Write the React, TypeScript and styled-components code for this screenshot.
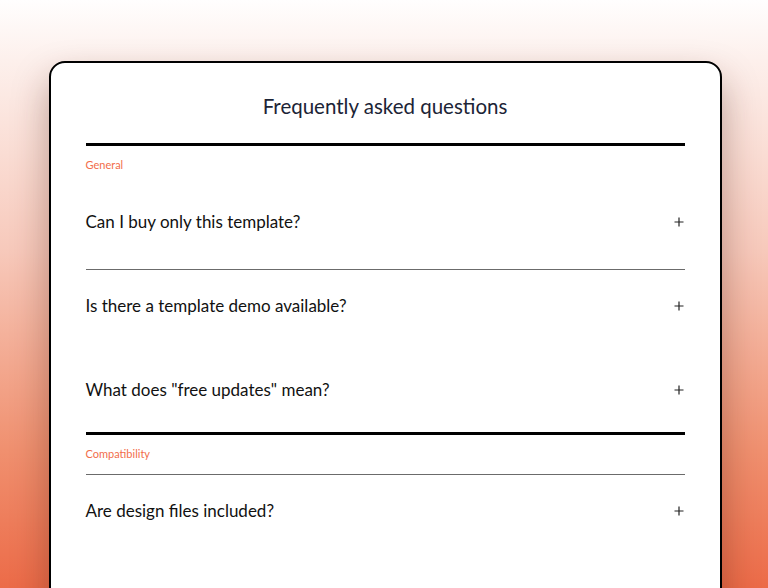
import React from "react";
import styled, { createGlobalStyle } from "styled-components";

const Global = createGlobalStyle`
  html, body { margin: 0; padding: 0; }
  body {
    height: 588px;
    overflow: hidden;
    font-family: Lato, "Open Sans", sans-serif;
    background: linear-gradient(
      to bottom,
      #fffefe 0px,
      #fdf0ec 60px,
      #f7c9bb 250px,
      #f0906f 450px,
      #ec6b48 588px
    );
  }
`;

const Page = styled.main`
  padding-top: 61px;
  display: flex;
  justify-content: center;
  padding-left: 2px;
`;

const Card = styled.section`
  width: 673px;
  box-sizing: border-box;
  background: #fff;
  border: 2px solid #000;
  border-radius: 16px 16px 0 0;
  padding: 0 35px 40px;
  box-shadow: 0 18px 36px rgba(70, 25, 15, 0.35);
  min-height: 560px;
`;

const Title = styled.h1`
  margin: 0;
  padding: 29px 0 23px;
  text-align: center;
  font-size: 20.5px;
  line-height: 28px;
  font-weight: 400;
  color: #1c2436;
`;

const Group = styled.div`
  border-top: 3px solid #000;
`;

const Label = styled.div<{ $ruled?: boolean }>`
  padding: 13px 0 14px;
  font-size: 11px;
  line-height: 12px;
  color: #f26d4b;
  border-bottom: 1px solid ${(p) => (p.$ruled ? "#6b6b6b" : "transparent")};
`;

const Item = styled.div<{ $ruled?: boolean }>`
  display: flex;
  align-items: center;
  justify-content: space-between;
  padding: 26px 0 37px;
  border-bottom: 1px solid ${(p) => (p.$ruled ? "#6b6b6b" : "transparent")};
  &:last-child {
    padding-bottom: 31px;
  }
`;

const Question = styled.span`
  font-size: 17px;
  line-height: 20px;
  color: #111;
`;

const Plus = styled.svg`
  width: 10px;
  height: 10px;
  flex: none;
  margin-right: 1px;
`;

const PlusIcon = () => (
  <Plus viewBox="0 0 10 10">
    <path d="M5 0.5v9M0.5 5h9" stroke="#222" strokeWidth="1.2" fill="none" />
  </Plus>
);

const groups = [
  {
    label: "General",
    labelRuled: false,
    items: [
      { q: "Can I buy only this template?", ruled: true },
      { q: "Is there a template demo available?", ruled: false },
      { q: 'What does "free updates" mean?', ruled: false },
    ],
  },
  {
    label: "Compatibility",
    labelRuled: true,
    items: [
      { q: "Are design files included?", ruled: false },
      { q: "Is the template compatible with all browsers?", ruled: false },
    ],
  },
];

export default function App() {
  return (
    <>
      <Global />
      <Page>
        <Card>
          <Title>Frequently asked questions</Title>
          {groups.map((g) => (
            <Group key={g.label}>
              <Label $ruled={g.labelRuled}>{g.label}</Label>
              {g.items.map((it) => (
                <Item key={it.q} $ruled={it.ruled}>
                  <Question>{it.q}</Question>
                  <PlusIcon />
                </Item>
              ))}
            </Group>
          ))}
        </Card>
      </Page>
    </>
  );
}
